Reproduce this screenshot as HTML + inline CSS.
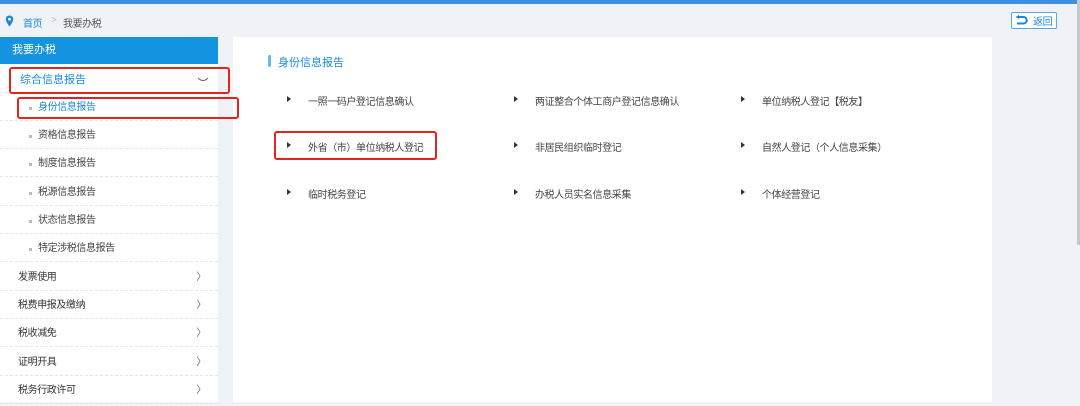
<!DOCTYPE html>
<html><head><meta charset="utf-8"><style>
*{margin:0;padding:0;box-sizing:border-box}
body{width:1080px;height:402px;overflow:hidden;background:#eff2f6;font-family:"Liberation Sans","Noto Sans CJK SC",sans-serif;font-size:10px;letter-spacing:-0.4px;color:#333;position:relative}
.a{position:absolute;white-space:nowrap}
.top{left:0;top:0;width:1080px;height:4px;background:#3d8fe0}
.side{left:0;top:37px;width:218px;height:365px;background:#fff}
.hd{left:0;top:37px;width:218px;height:27px;background:#1493e0;color:#fff;font-size:11px;letter-spacing:0;line-height:27px;padding-left:12px}
.row{left:0;width:218px;height:28px;border-bottom:1px dashed #e6e6e6;line-height:30px}
.sub{padding-left:38px;color:#444}
.sub:before{content:"";position:absolute;left:29px;top:14px;width:3px;height:3px;background:#bbb}
.main{padding-left:18px;color:#333}
.main span{position:absolute;right:12px;color:#666}
.red{border:2px solid #e2241c;border-radius:3px}
.panel{left:233px;top:37px;width:759px;height:365px;background:#fff}
.it{color:#444}
.tri{position:absolute;width:0;height:0;border-top:3px solid transparent;border-bottom:3px solid transparent;border-left:4px solid #333}
</style></head><body>
<div class="a top"></div>
<svg class="a" style="left:5px;top:15px" width="9" height="12" viewBox="0 0 9 12"><path d="M4.5 0.5C2.3 0.5 0.8 2.1 0.8 4.1 0.8 7 4.5 11.5 4.5 11.5S8.2 7 8.2 4.1C8.2 2.1 6.7 0.5 4.5 0.5Z" fill="#1a8ad8"/><circle cx="4.5" cy="4.2" r="1.4" fill="#fff"/></svg>
<div class="a" style="left:23px;top:15px;color:#1a8ad8">首页</div>
<div class="a" style="left:51px;top:15px;color:#bbb">&gt;</div>
<div class="a" style="left:63px;top:15px;color:#555">我要办税</div>
<div class="a" style="left:1011px;top:12px;width:46px;height:17px;border:1px solid #5aa6e0;border-radius:2px;background:#fff"></div>
<svg class="a" style="left:1015px;top:15px" width="13" height="11" viewBox="0 0 13 11"><path d="M3 2H8.5A3 3 0 0 1 8.5 8.5H2" fill="none" stroke="#1a8ad8" stroke-width="2"/><path d="M0.5 2L4 0V4Z" fill="#1a8ad8"/></svg>
<div class="a" style="left:1033px;top:13px;color:#1a8ad8">返回</div>
<div class="a" style="left:1077px;top:0;width:3px;height:245px;background:#c8c8c8"></div>

<div class="a side"></div>
<div class="a hd">我要办税</div>
<div class="a row" style="top:65px;padding-left:20px;color:#1a8ad8;font-size:11px;letter-spacing:0">综合信息报告</div>
<svg class="a" style="left:197px;top:77px" width="12" height="6" viewBox="0 0 12 6"><path d="M1 1Q6 6 11 1" fill="none" stroke="#666" stroke-width="1"/></svg>
<div class="a row sub" style="top:93px;color:#1a8ad8">身份信息报告</div>
<div class="a row sub" style="top:121px">资格信息报告</div>
<div class="a row sub" style="top:149px">制度信息报告</div>
<div class="a row sub" style="top:178px">税源信息报告</div>
<div class="a row sub" style="top:206px">状态信息报告</div>
<div class="a row sub" style="top:234px">特定涉税信息报告</div>
<div class="a row main" style="top:263px">发票使用<span>〉</span></div>
<div class="a row main" style="top:291px">税费申报及缴纳<span>〉</span></div>
<div class="a row main" style="top:319px">税收减免<span>〉</span></div>
<div class="a row main" style="top:348px">证明开具<span>〉</span></div>
<div class="a row main" style="top:376px">税务行政许可<span>〉</span></div>

<div class="a panel"></div>
<div class="a" style="left:268px;top:55px;width:3px;height:12px;background:#6db8ea;border-radius:2px"></div>
<div class="a" style="left:278px;top:54px;color:#1a8ad8;font-size:11px;letter-spacing:0">身份信息报告</div>

<div class="tri" style="left:287px;top:96px"></div><div class="a it" style="left:308px;top:93px">一照一码户登记信息确认</div>
<div class="tri" style="left:514px;top:96px"></div><div class="a it" style="left:535px;top:93px">两证整合个体工商户登记信息确认</div>
<div class="tri" style="left:741px;top:96px"></div><div class="a it" style="left:762px;top:93px">单位纳税人登记【税友】</div>
<div class="tri" style="left:287px;top:142px"></div><div class="a it" style="left:308px;top:139px">外省（市）单位纳税人登记</div>
<div class="tri" style="left:514px;top:142px"></div><div class="a it" style="left:535px;top:139px">非居民组织临时登记</div>
<div class="tri" style="left:741px;top:142px"></div><div class="a it" style="left:762px;top:139px">自然人登记（个人信息采集）</div>
<div class="tri" style="left:287px;top:189px"></div><div class="a it" style="left:308px;top:186px">临时税务登记</div>
<div class="tri" style="left:514px;top:189px"></div><div class="a it" style="left:535px;top:186px">办税人员实名信息采集</div>
<div class="tri" style="left:741px;top:189px"></div><div class="a it" style="left:762px;top:186px">个体经营登记</div>

<div class="a red" style="left:9px;top:67px;width:221px;height:27px"></div>
<div class="a red" style="left:17px;top:97px;width:222px;height:22px"></div>
<div class="a red" style="left:274px;top:131px;width:163px;height:29px"></div>
</body></html>
